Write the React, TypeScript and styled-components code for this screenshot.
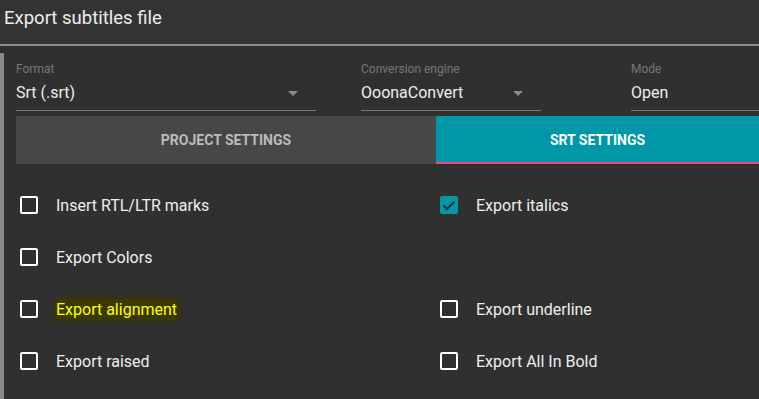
import styled, { createGlobalStyle } from 'styled-components';

const GlobalStyle = createGlobalStyle`
    html, body {
        margin: 0;
        padding: 0;
        background: #303030;
        font-family: Roboto, "Liberation Sans", sans-serif;
    }
`;

interface Field {
    label: string;
    value: string;
    width: number;
    arrow?: boolean;
}

const fields: Field[] = [
    { label: 'Format', value: 'Srt (.srt)', width: 300, arrow: true },
    { label: 'Conversion engine', value: 'OoonaConvert', width: 180, arrow: true },
    { label: 'Mode', value: 'Open', width: 128 },
];

interface Option {
    label: string;
    checked?: boolean;
    highlight?: boolean;
}

const rows: (Option | null)[][] = [
    [{ label: 'Insert RTL/LTR marks' }, { label: 'Export italics', checked: true }],
    [{ label: 'Export Colors' }, null],
    [{ label: 'Export alignment', highlight: true }, { label: 'Export underline' }],
    [{ label: 'Export raised' }, { label: 'Export All In Bold' }],
];

const CheckBox = ({ checked }: { checked?: boolean }) => (
    <Box $checked={checked}>
        {checked && (
            <svg width="16" height="16" viewBox="0 0 24 24">
                <path d="M3.5 12.5l5.5 5.5L20.5 6.5" fill="none" stroke="#2f2f2f" strokeWidth="3" />
            </svg>
        )}
    </Box>
);

const App = () => {
    return (
        <>
            <GlobalStyle />
            <Page>
                <Header>Export subtitles file</Header>
                <Body>
                    <Fields>
                        {fields.map(f => (
                            <FieldBox key={f.label} $width={f.width}>
                                <FieldLabel>{f.label}</FieldLabel>
                                <FieldValue>
                                    {f.value}
                                    {f.arrow && <Arrow />}
                                </FieldValue>
                            </FieldBox>
                        ))}
                    </Fields>
                    <Tabs>
                        <Tab>PROJECT SETTINGS</Tab>
                        <Tab $active>SRT SETTINGS</Tab>
                    </Tabs>
                    <Options>
                        {rows.flat().map((o, i) =>
                            o ? (
                                <OptionRow key={i}>
                                    <CheckBox checked={o.checked} />
                                    <OptionLabel $highlight={o.highlight}>{o.label}</OptionLabel>
                                </OptionRow>
                            ) : (
                                <OptionRow key={i} />
                            )
                        )}
                    </Options>
                </Body>
            </Page>
        </>
    );
};

export default App;

const Page = styled.div`
    width: 759px;
    height: 399px;
    overflow: hidden;
    display: flex;
    flex-direction: column;
`;

const Header = styled.div`
    height: 46px;
    box-sizing: border-box;
    background: #333333;
    color: #eeeeee;
    font-size: 18.5px;
    line-height: 36px;
    padding-left: 4px;
    border-bottom: 2px solid #8c8c8c;
`;

const Body = styled.div`
    flex: 1;
    margin-top: 7px;
    padding-left: 12px;
    border-left: 4px solid #8a8a8a;
    border-top-right-radius: 3px;
`;

const Fields = styled.div`
    display: flex;
    gap: 45px;
    padding-top: 9px;
`;

const FieldBox = styled.div<{ $width: number }>`
    width: ${p => p.$width}px;
    border-bottom: 1px solid #777777;
    padding-bottom: 7px;
    &:last-child {
        margin-left: 45px;
    }
`;

const FieldLabel = styled.div`
    font-size: 12px;
    line-height: 14px;
    color: #777777;
`;

const FieldValue = styled.div`
    display: flex;
    align-items: center;
    justify-content: space-between;
    font-size: 16px;
    line-height: 20px;
    color: #eeeeee;
    margin-top: 7px;
    padding-right: 18px;
`;

const Arrow = styled.span`
    width: 0;
    height: 0;
    border-left: 5px solid transparent;
    border-right: 5px solid transparent;
    border-top: 5px solid #8a8a8a;
`;

const Tabs = styled.div`
    display: flex;
    margin-top: 5px;
    height: 48px;
`;

const Tab = styled.div<{ $active?: boolean }>`
    flex: ${p => (p.$active ? '1' : '0 0 420px')};
    display: flex;
    align-items: center;
    justify-content: center;
    box-sizing: border-box;
    background: ${p => (p.$active ? '#0097a7' : '#474747')};
    color: ${p => (p.$active ? '#ffffff' : '#bbbbbb')};
    font-size: 14px;
    font-weight: 700;
    border-bottom: 2px solid ${p => (p.$active ? '#ff4081' : '#474747')};
    padding-top: 2px;
`;

const Options = styled.div`
    display: grid;
    grid-template-columns: 420px 1fr;
    grid-auto-rows: 52px;
    padding-top: 15px;
`;

const OptionRow = styled.div`
    display: flex;
    align-items: center;
    padding-left: 4px;
    gap: 18px;
`;

const Box = styled.span<{ $checked?: boolean }>`
    width: 18px;
    height: 18px;
    box-sizing: border-box;
    border-radius: 2px;
    border: ${p => (p.$checked ? '0' : '2px solid #ffffff')};
    background: ${p => (p.$checked ? '#0097a7' : 'transparent')};
    display: flex;
    align-items: center;
    justify-content: center;
`;

const OptionLabel = styled.span<{ $highlight?: boolean }>`
    font-size: 16px;
    color: ${p => (p.$highlight ? '#ffff00' : '#eeeeee')};
    background: ${p => (p.$highlight ? '#3a3a00' : 'transparent')};
    box-shadow: ${p => (p.$highlight ? '0 0 4px 2px #3a3a00' : 'none')};
    border-radius: 4px;
`;
